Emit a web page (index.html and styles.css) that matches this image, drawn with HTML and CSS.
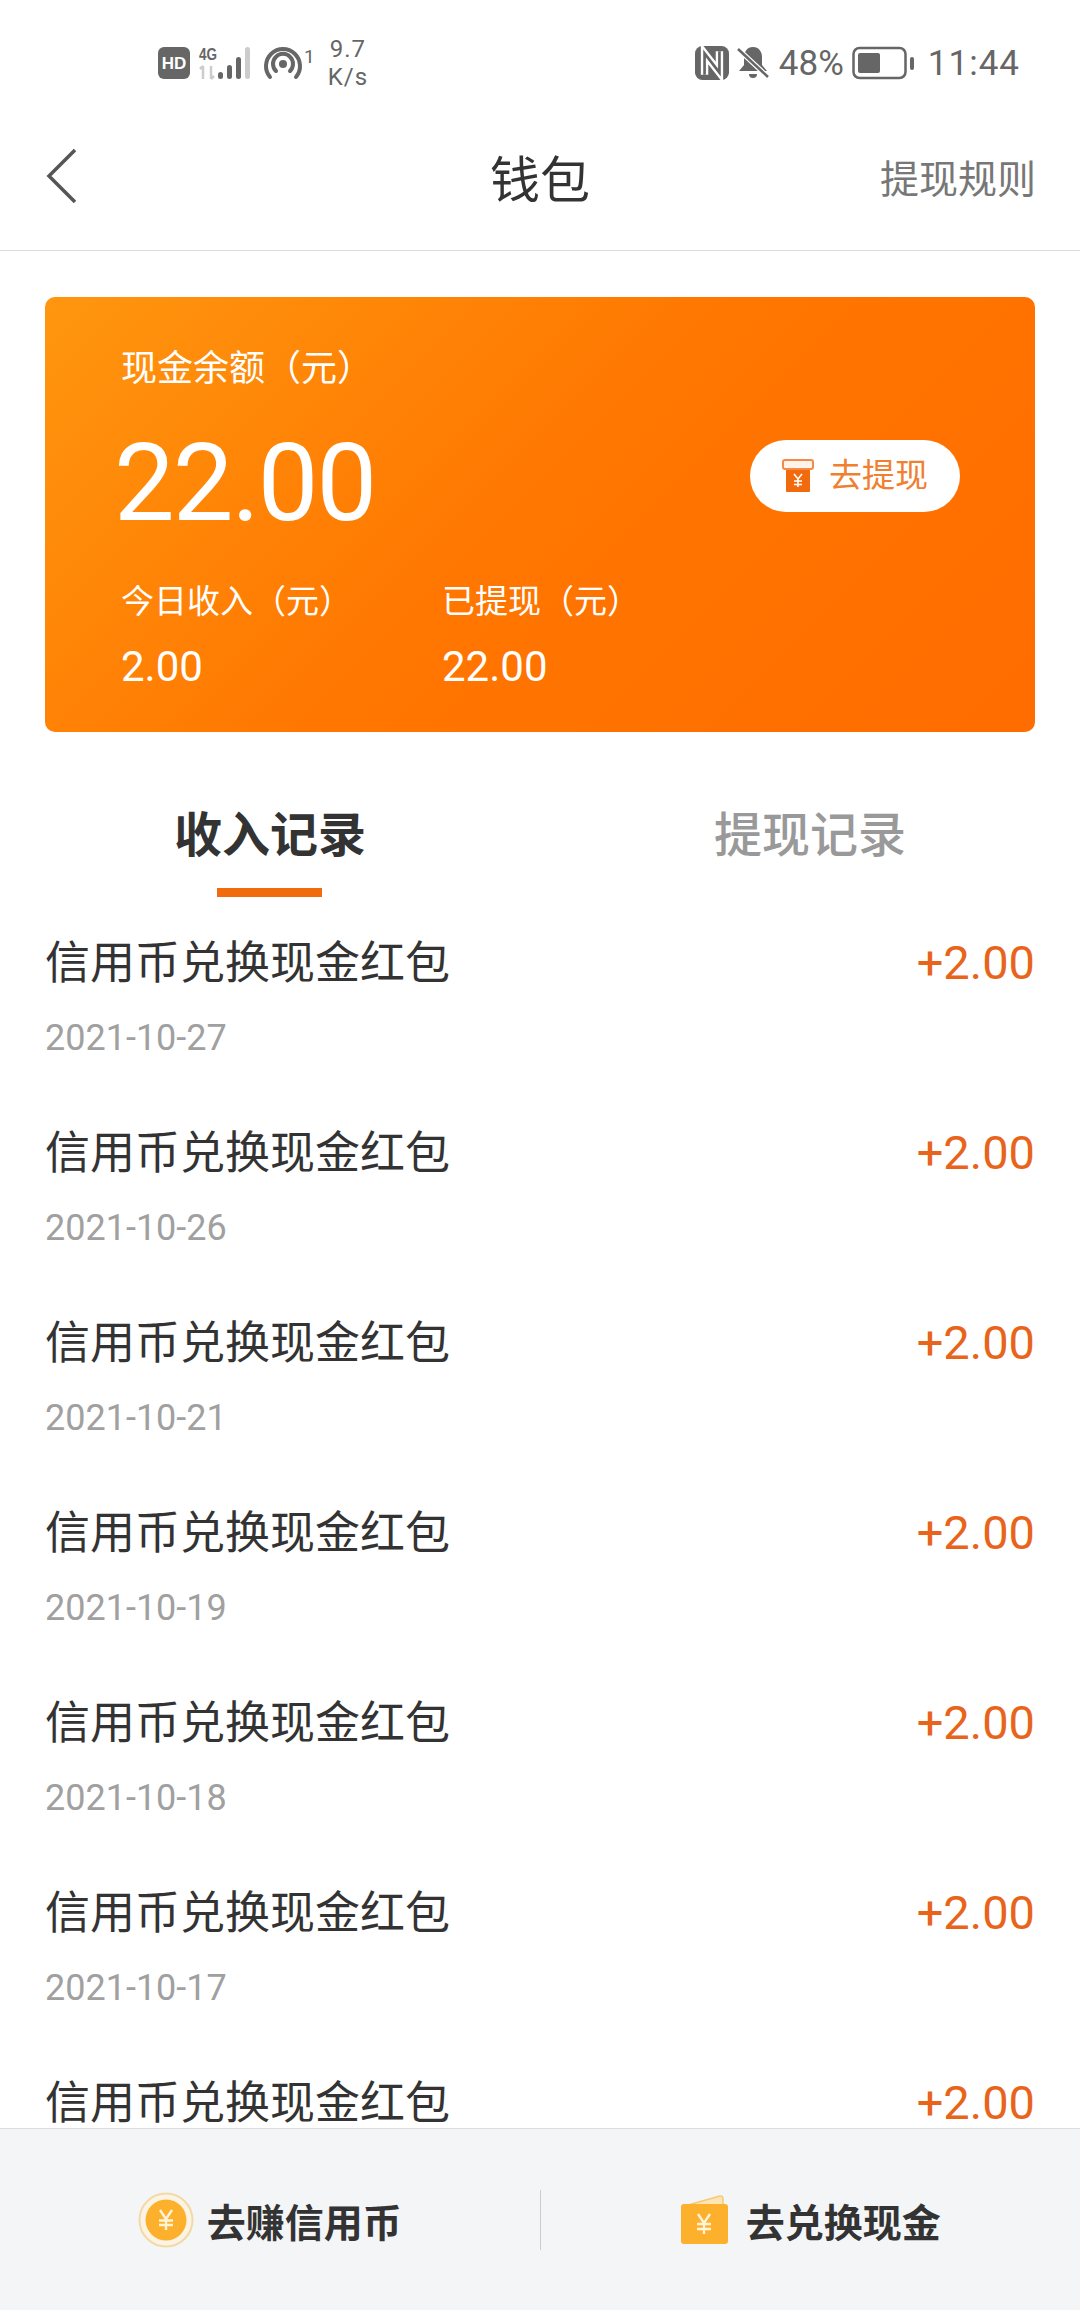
FILE: index.html
```html
<!DOCTYPE html>
<html lang="zh-CN">
<head>
  <meta charset="UTF-8">
  <title>钱包</title>
  <link rel="stylesheet" href="styles.css">
</head>
<body>
  <div class="page">
    <div class="status">
      <div class="status-left">
        <svg class="hd" width="32" height="32" viewBox="0 0 32 32"><rect width="32" height="32" rx="6" fill="#666"/><text x="16" y="22" text-anchor="middle" font-family="Liberation Sans" font-size="17" font-weight="700" fill="#fff">HD</text></svg>
        <svg class="signal" width="56" height="36" viewBox="0 0 56 36">
          <text x="1" y="15" font-family="Liberation Sans" font-size="16" font-weight="700" fill="#666" textLength="18" lengthAdjust="spacingAndGlyphs">4G</text>
          <path d="M5 21v13M2 24l3-3M13 21v13M13 34l3-3" stroke="#ccc" stroke-width="2.5" fill="none"/>
          <rect x="20" y="27" width="5" height="7" rx="2.5" fill="#666"/>
          <rect x="29" y="20" width="5" height="14" rx="2.5" fill="#666"/>
          <rect x="38" y="12" width="5" height="22" rx="2.5" fill="#666"/>
          <rect x="47" y="2" width="5" height="32" rx="2.5" fill="#ccc"/>
        </svg>
        <svg class="hotspot" width="40" height="36" viewBox="0 0 40 36">
          <path d="M7 32a17 17 0 1 1 26 0" stroke="#666" stroke-width="4" stroke-linecap="round" fill="none"/>
          <path d="M13 26a10 10 0 1 1 14 0" stroke="#666" stroke-width="4" stroke-linecap="round" fill="none"/>
          <circle cx="20" cy="19" r="4" fill="#666"/>
        </svg>
        <span class="hot-count">1</span>
        <span class="speed">9.7<br>K/s</span>
      </div>
      <div class="status-right">
        <svg width="34" height="34" viewBox="0 0 32 32"><rect width="32" height="32" rx="7" fill="#666"/><path d="M9 27V7l14 18V5" stroke="#fff" stroke-width="7" fill="none"/><path d="M9 27V7l14 18V5" stroke="#666" stroke-width="2.5" fill="none"/></svg>
        <svg width="32" height="34" viewBox="0 0 32 34"><path d="M16 1c-6 0-9 5-9 10v8l-5 6h28l-5-6v-8c0-5-3-10-9-10z" fill="#666"/><path d="M12 28h8a4 4 0 0 1-8 0z" fill="#666"/><path d="M1 3l30 28" stroke="#fff" stroke-width="5"/><path d="M1 3l30 28" stroke="#666" stroke-width="2.5"/></svg>
        <span class="pct">48%</span>
        <svg width="62" height="34" viewBox="0 0 62 34"><rect x="1.5" y="2" width="52" height="30" rx="6" fill="none" stroke="#666" stroke-width="2.5"/><rect x="6" y="7" width="22" height="20" rx="2" fill="#666"/><rect x="58" y="11" width="4" height="13" rx="2" fill="#666"/></svg>
        <span class="clock">11:44</span>
      </div>
    </div>

    <div class="nav">
      <svg class="back" width="32" height="56" viewBox="0 0 32 56"><path d="M29 2L3 28l26 26" stroke="#555" stroke-width="3.5" fill="none"/></svg>
      <div class="nav-title">钱包</div>
      <div class="nav-rule">提现规则</div>
    </div>

    <div class="card">
      <div class="card-main">
        <div class="card-label top">现金余额（元）</div>
        <div class="balance">22.00</div>
        <div class="card-stats">
          <div class="stat">
            <div class="card-label">今日收入（元）</div>
            <div class="stat-val">2.00</div>
          </div>
          <div class="stat">
            <div class="card-label">已提现（元）</div>
            <div class="stat-val">22.00</div>
          </div>
        </div>
      </div>
      <div class="withdraw">
        <svg width="32" height="34" viewBox="0 0 32 34">
          <rect x="4" y="8" width="24" height="25" rx="1" fill="#f26a0e"/>
          <rect x="1" y="1" width="30" height="9" rx="2" fill="#fff3ea" stroke="#f4894a" stroke-width="2"/>
          <path d="M12 15l4 5 4-5M16 20v8M12 22h8M12 25.500h8" stroke="#fff" stroke-width="1.6" fill="none"/>
        </svg>
        <span>去提现</span>
      </div>
    </div>

    <div class="tabs">
      <div class="tab active">收入记录</div>
      <div class="tab">提现记录</div>
    </div>

    <div class="list">
      <div class="row"><div class="row-title">信用币兑换现金红包</div><div class="row-amt">+2.00</div><div class="row-date">2021-10-27</div></div>
      <div class="row"><div class="row-title">信用币兑换现金红包</div><div class="row-amt">+2.00</div><div class="row-date">2021-10-26</div></div>
      <div class="row"><div class="row-title">信用币兑换现金红包</div><div class="row-amt">+2.00</div><div class="row-date">2021-10-21</div></div>
      <div class="row"><div class="row-title">信用币兑换现金红包</div><div class="row-amt">+2.00</div><div class="row-date">2021-10-19</div></div>
      <div class="row"><div class="row-title">信用币兑换现金红包</div><div class="row-amt">+2.00</div><div class="row-date">2021-10-18</div></div>
      <div class="row"><div class="row-title">信用币兑换现金红包</div><div class="row-amt">+2.00</div><div class="row-date">2021-10-17</div></div>
      <div class="row"><div class="row-title">信用币兑换现金红包</div><div class="row-amt">+2.00</div></div>
    </div>

    <div class="bottom">
      <div class="bottom-btn">
        <svg width="56" height="56" viewBox="0 0 56 56">
          <circle cx="28" cy="28" r="26.500" fill="#fbf3e3" stroke="#f3d9a6" stroke-width="2"/>
          <circle cx="28" cy="28" r="20.500" fill="#fdb02c"/>
          <path d="M22 18l6 9 6-9M28 27v11M21 28.500h14M21 33h14" stroke="#fff3d6" stroke-width="2.400" fill="none"/>
        </svg>
        <span>去赚信用币</span>
      </div>
      <div class="divider"></div>
      <div class="bottom-btn wide-gap">
        <svg width="50" height="50" viewBox="0 0 50 50">
          <path d="M8 10L40 1q3-.5 3 3v6z" fill="#fde6b4" stroke="#f5c978" stroke-width="1.500"/>
          <rect x="1" y="9" width="47" height="40" rx="3" fill="#fdb02c"/>
          <path d="M18 19l6 9 6-9M24 28v11M17 29h14M17 34h14" stroke="#fff3d6" stroke-width="2.400" fill="none"/>
        </svg>
        <span>去兑换现金</span>
      </div>
    </div>
  </div>
</body>
</html>
```

FILE: styles.css
```css
* { box-sizing: border-box; }
html, body { margin: 0; padding: 0; }
body { background: #fff; font-family: Roboto, "Noto Sans CJK SC", sans-serif; color: #333; }
.page { width: 1080px; height: 2310px; display: flex; flex-direction: column; overflow: hidden; }

.status { height: 90px; display: flex; justify-content: space-between; align-items: center; padding: 36px 60px 0 158px; color: #666; flex: none; }
.status-left, .status-right { display: flex; align-items: center; }
.signal { margin-left: 8px; }
.hotspot { margin-left: 9px; }
.hot-count { font-size: 19px; margin: -14px 0 0 1px; }
.speed { font-size: 24px; line-height: 28px; margin-left: 13px; text-align: center; letter-spacing: 1px; }
.status-right { gap: 8px; }
.pct { font-size: 35px; margin-left: 2px; }
.clock { font-size: 35px; margin-left: 6px; letter-spacing: 1px; }

.nav { height: 161px; flex: none; display: flex; align-items: center; justify-content: space-between; padding: 12px 44px 0 46px; border-bottom: 1px solid #ddd; position: relative; }
.nav-title { font-size: 50px; color: #333; position: absolute; left: 0; right: 0; text-align: center; top: 56px; line-height: 70px; }
.nav-rule { font-size: 39px; color: #777; }

.card { flex: none; margin: 46px 45px 0 45px; height: 435px; border-radius: 10px; background: linear-gradient(135deg, #ff960f 0%, #ff7600 50%, #ff6c00 100%); display: flex; justify-content: space-between; color: #fff; padding: 0 75px 0 76px; }
.card-main { padding-top: 50px; }
.card-label { font-size: 33px; line-height: 42px; }
.card-label.top { font-size: 36px; line-height: 44px; }
.balance { font-size: 108px; line-height: 120px; margin: 32px 0 0 -7px; letter-spacing: -2px; }
.card-stats { display: flex; margin-top: 38px; }
.stat:first-child { width: 321px; }
.stat-val { font-size: 42px; line-height: 50px; margin-top: 19px; }
.withdraw { flex: none; align-self: flex-start; margin-top: 143px; width: 210px; height: 72px; border-radius: 36px; background: #fff; display: flex; align-items: center; justify-content: center; gap: 15px; color: #f08030; font-size: 33px; line-height: 66px; }

.tabs { flex: none; display: flex; margin-top: 65px; height: 101px; }
.tab { width: 540px; text-align: center; font-size: 48px; color: #999; line-height: 78px; position: relative; font-weight: 500; }
.tab.active { color: #333; font-weight: 700; }
.tab.active::after { content: ""; position: absolute; left: 217px; top: 91px; width: 105px; height: 9px; background: #f26a0e; }

.list { flex: 1; overflow: hidden; padding: 0 45px 0 45px; }
.row { height: 190px; display: grid; grid-template-columns: 1fr auto; align-content: start; padding-top: 34px; }
.row-title { font-size: 45px; line-height: 64px; color: #333; }
.row-amt { font-size: 47px; line-height: 62px; color: #e8641b; }
.row-date { font-size: 36px; line-height: 44px; color: #a0a0a0; margin-top: 20px; grid-column: 1 / 3; }

.bottom { flex: none; height: 182px; background: #f4f5f7; border-top: 1px solid #ddd; display: flex; align-items: center; }
.bottom-btn { flex: 1; display: flex; align-items: center; justify-content: center; gap: 13px; font-size: 39px; font-weight: 700; color: #333; }
.bottom-btn.wide-gap { gap: 16px; }
.divider { width: 1px; height: 60px; background: #ccc; flex: none; }
```
